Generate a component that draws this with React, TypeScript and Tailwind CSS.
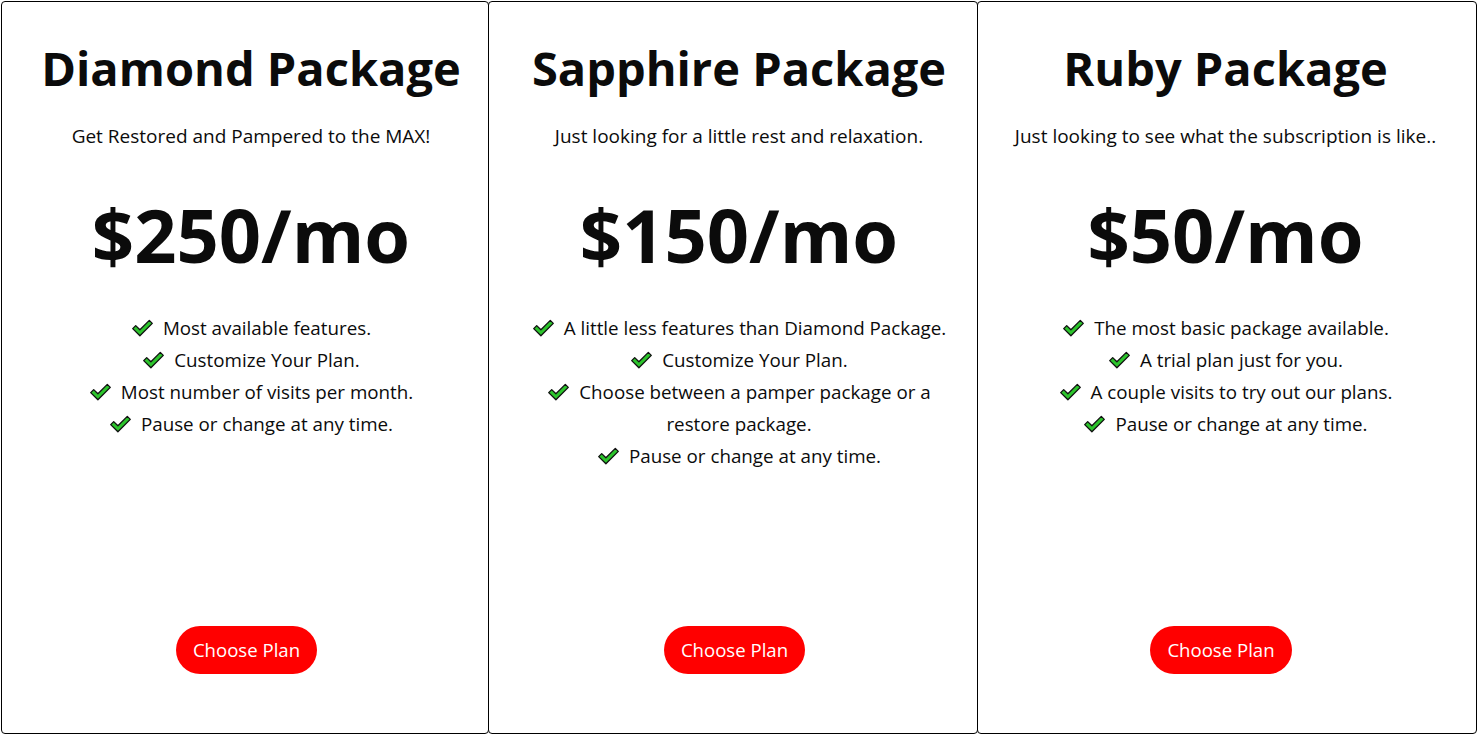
import React from "react";

type Plan = {
  name: string;
  tagline: string;
  price: string;
  features: string[];
  extra: string;
};

const plans: Plan[] = [
  {
    name: "Diamond Package",
    tagline: "Get Restored and Pampered to the MAX!",
    price: "$250/mo",
    features: [
      "Most available features.",
      "Customize Your Plan.",
      "Most number of visits per month.",
      "Pause or change at any time.",
    ],
    extra: "w-[488px] pl-3",
  },
  {
    name: "Sapphire Package",
    tagline: "Just looking for a little rest and relaxation.",
    price: "$150/mo",
    features: [
      "A little less features than Diamond Package.",
      "Customize Your Plan.",
      "Choose between a pamper package or a restore package.",
      "Pause or change at any time.",
    ],
    extra: "w-[490px] -ml-px pl-3",
  },
  {
    name: "Ruby Package",
    tagline: "Just looking to see what the subscription is like..",
    price: "$50/mo",
    features: [
      "The most basic package available.",
      "A trial plan just for you.",
      "A couple visits to try out our plans.",
      "Pause or change at any time.",
    ],
    extra: "w-[500px] -ml-px pr-[3px]",
  },
];

// green tick with a dark outline
const Check = () => (
  <svg
    className="inline-block w-[23px] h-[18px] mr-[9px] align-[-2px]"
    viewBox="0 0 22 18"
  >
    <path
      d="M1.2 9.6 L4.2 6.6 L8.4 10.8 L17.8 1.4 L20.8 4.4 L8.4 16.8 Z"
      fill="#2cc42c"
      stroke="#111"
      strokeWidth="1.3"
      strokeLinejoin="round"
    />
  </svg>
);

const PlanCard: React.FC<{ plan: Plan }> = ({ plan }) => (
  <div
    className={`${plan.extra} h-[733px] border border-black rounded-[4px] bg-white flex flex-col items-center text-center text-[#0b0b0b]`}
  >
    <h2 className="mt-[34px] text-[47px] leading-[64px] font-bold">
      {plan.name}
    </h2>
    <p className="mt-[26px] text-[19px] leading-[20px]">{plan.tagline}</p>
    <div className="mt-[39px] text-[74px] leading-[100px] font-bold">
      {plan.price}
    </div>
    <ul className="mt-[27px] max-w-[440px] text-[18.8px] leading-[32px]">
      {plan.features.map((f) => (
        <li key={f}>
          <Check />
          {f}
        </li>
      ))}
    </ul>
    <button className="mt-auto mb-[59px] mr-[9px] h-[48px] px-[17px] rounded-full bg-[#ff0000] text-white text-[18.6px]">
      Choose Plan
    </button>
  </div>
);

export default function App() {
  return (
    <div
      className="flex pl-px pt-px bg-white min-h-[736px]"
      style={{ fontFamily: '"Open Sans", "Noto Sans", sans-serif' }}
    >
      {plans.map((p) => (
        <PlanCard key={p.name} plan={p} />
      ))}
    </div>
  );
}
